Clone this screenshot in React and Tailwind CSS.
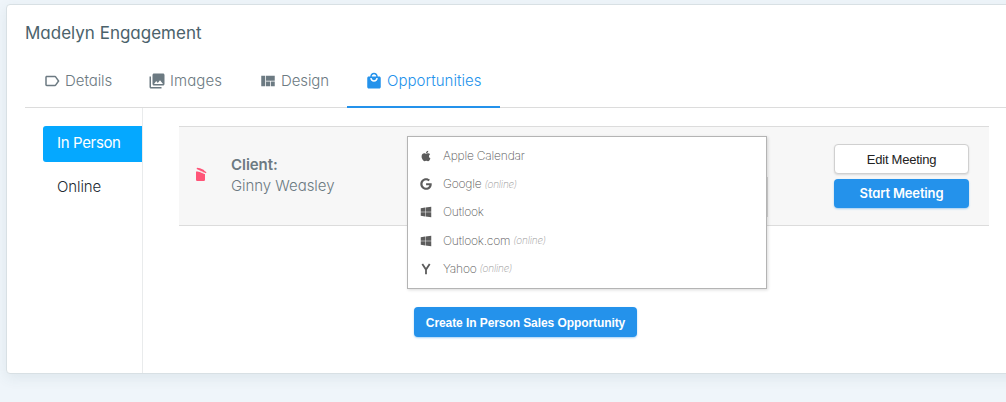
import React from "react";
import { MdLabelOutline, MdPhotoLibrary, MdViewQuilt, MdLocalMall } from "react-icons/md";
import { FaApple, FaGoogle, FaWindows } from "react-icons/fa";

const tabs = [
  { label: "Details", Icon: MdLabelOutline, box: "w-[105px] pl-[18px]", text: "tracking-[-0.05px]" },
  { label: "Images", Icon: MdPhotoLibrary, box: "w-[112px] pl-[18px]", text: "tracking-[0.1px]" },
  { label: "Design", Icon: MdViewQuilt, box: "w-[105px] pl-[17px]", text: "tracking-[-0.1px]" },
  { label: "Opportunities", Icon: MdLocalMall, active: true, box: "w-[153px] pl-[18px]", text: "tracking-[0.05px]" },
];

function YahooIcon({ className }) {
  return (
    <svg viewBox="0 0 12 12" className={className} fill="none" stroke="currentColor" strokeWidth="1.8">
      <path d="M2.3 1 6 6.6 9.7 1M6 6v5.2" />
    </svg>
  );
}

const calendars = [
  { name: "Apple Calendar", Icon: FaApple },
  { name: "Google", Icon: FaGoogle, online: true },
  { name: "Outlook", Icon: FaWindows },
  { name: "Outlook.com", Icon: FaWindows, online: true },
  { name: "Yahoo", Icon: YahooIcon, online: true },
];

function Tab({ label, Icon, active, box, text }) {
  return (
    <div
      className={`-mb-px flex h-[53px] shrink-0 items-center gap-[3px] border-b-2 whitespace-nowrap ${box} ${
        active ? "border-[#2492eb] text-[#2492eb]" : "border-transparent text-[#6c7a82]"
      }`}
    >
      <Icon className="size-[18px] shrink-0" />
      <span className={`pt-[2px] pl-px text-[15px] font-light ${text}`}>{label}</span>
    </div>
  );
}

function CalendarMenu() {
  return (
    <div className="absolute top-[9px] left-[228px] h-[153px] w-[360px] border border-[#b4b4b4] bg-white pt-[5px] [font-feature-settings:normal] shadow-[1px_1px_3px_rgba(0,0,0,0.15)]">
      {calendars.map(({ name, Icon, online }) => (
        <div key={name} className="flex h-[28.2px] items-center whitespace-nowrap">
          <Icon className="ml-3 size-3 shrink-0 text-[#5c5c5c]" />
          <span className="ml-[11px] text-[12px] font-extralight tracking-[-0.2px] text-[#555]">{name}</span>
          {online && (
            <span className="ml-[3px] text-[10px] font-extralight tracking-[-0.2px] text-[#999] italic">(online)</span>
          )}
        </div>
      ))}
    </div>
  );
}

export default function App() {
  return (
    <div className="h-[402px] w-[1006px] overflow-hidden bg-[#eff5fa] pt-1 pl-[6px] font-['Inter',sans-serif] [font-feature-settings:'cv11']">
      <div className="flex h-[370px] w-[1030px] flex-col rounded-[4px] border border-[#d8e0e4] bg-white pl-[18px] shadow-[0_4px_14px_rgba(60,90,100,0.09)]">
        <h1 className="pt-4 text-[17px] leading-6 font-normal tracking-[0px] whitespace-nowrap text-[#4b626b]">
          Madelyn Engagement
        </h1>
        <nav className="mt-[10px] flex h-[53px] border-b border-[#dcdcdc]">
          {tabs.map((tab) => (
            <Tab key={tab.label} {...tab} />
          ))}
        </nav>
        <div className="flex flex-1">
          <aside className="w-[118px] border-r border-[#e9ebec] pt-[18px] pl-[18px] text-[15px]">
            <div className="flex h-9 items-center rounded-l-[3px] bg-[#05a8ff] pl-[14px] tracking-[-0.35px] text-white">
              <span className="relative -top-px">In Person</span>
            </div>
            <div className="mt-2 flex h-9 items-center pl-[14px] font-light tracking-[-0.1px] text-[#212b33]">
              <span className="relative -top-px">Online</span>
            </div>
          </aside>
          <main className="ml-9 w-[810px] pt-[18px]">
            <section className="relative flex h-[100px] items-center border-y border-[#dcdcdc] bg-[#f7f7f7]">
              <svg viewBox="0 0 12 15" className="mb-[3px] ml-4 h-[15px] w-3 shrink-0" fill="#ff5578">
                <path d="M1 4.500h4.500L10 6.300v6.500a1.200 1.200 0 0 1-1.200 1.200H2.200A1.200 1.200 0 0 1 1 12.800z" />
                <path d="M1.300 3 11 7.200" stroke="#f7f7f7" strokeWidth="1" />
                <path d="M2 .8 5 1.200 8.500 2.700 9.700 4 11.400 5.200 11 6.200 1.600 1.900z" />
              </svg>
              <div className="mb-[2px] ml-6 text-[15px] leading-[21px] font-light tracking-[-0.05px] whitespace-nowrap text-[#6c7a82]">
                <div className="font-semibold">Client:</div>
                <div>Ginny Weasley</div>
              </div>
              <div className="mr-5 ml-auto flex w-[135px] flex-col gap-[5px] text-[13px]">
                <button className="h-[30px] rounded-[4px] border border-[#d0d0d0] bg-white pt-px font-['Liberation_Sans',sans-serif] tracking-[-0.25px] text-[#222] shadow-[0_1px_2px_rgba(0,0,0,0.12)]">
                  Edit Meeting
                </button>
                <button className="h-[29px] rounded-[4px] bg-[#2492eb] font-semibold tracking-[-0.15px] text-white shadow-[0_1px_2px_rgba(36,146,235,0.4)]">
                  Start Meeting
                </button>
              </div>
              <div className="absolute top-[50px] left-[588px] h-10 w-px bg-[#d4d4d4]" />
              <CalendarMenu />
            </section>
            <button className="mt-[81px] ml-[235px] block h-[30px] w-[223px] rounded-[4px] bg-[#2492eb] pt-px font-['Liberation_Sans',sans-serif] text-[12px] font-bold tracking-[-0.08px] whitespace-nowrap text-white shadow-[0_1px_2px_rgba(36,146,235,0.4)]">
              Create In Person Sales Opportunity
            </button>
          </main>
        </div>
      </div>
    </div>
  );
}
